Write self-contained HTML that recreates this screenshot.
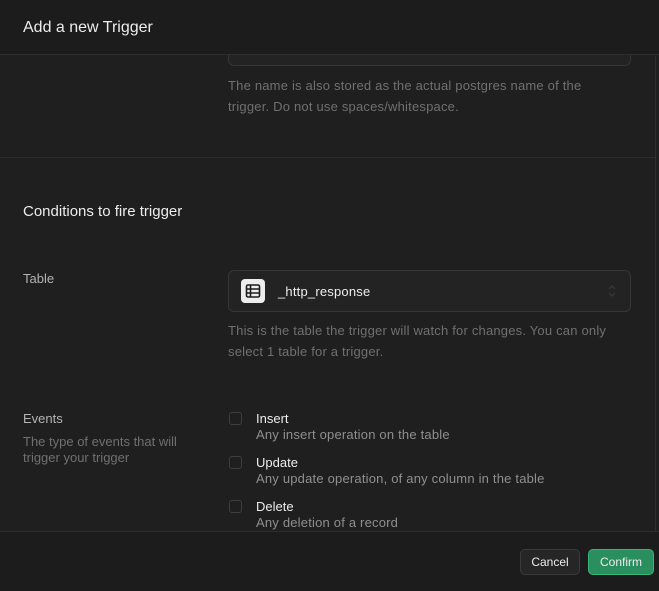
<!DOCTYPE html>
<html><head><style>
*{margin:0;padding:0;box-sizing:border-box}
body{width:659px;height:591px;background:#1f1f1f;font-family:"Liberation Sans",sans-serif;color:#ededed;position:relative;overflow:hidden}
.hdr{position:absolute;left:0;top:0;width:659px;height:55px;background:#1c1c1c;border-bottom:1px solid #2e2e2e}
.hdr span{position:absolute;left:23px;top:19px;font-size:16px;color:#ededed}
.t{position:absolute;font-size:13px}
.muted{color:#707070;font-size:13px;line-height:21px;white-space:nowrap;letter-spacing:0.2px}
.box{position:absolute;border:1px solid #363636;border-radius:6px;background:#232323}
.cb{position:absolute;left:229px;width:13px;height:13px;border:1px solid #3e3e3e;border-radius:3px}
.lab{position:absolute;left:256px;font-size:13px;color:#ededed}
.sub{position:absolute;left:256px;font-size:13px;color:#8f8f8f;letter-spacing:0.2px}
.btn{position:absolute;top:549px;height:26px;border-radius:5px;font-size:12px;text-align:center;line-height:24px}
</style></head><body>
<div class="box" style="left:228px;top:30px;width:403px;height:36px;border-top:none"></div>
<div class="hdr"><span>Add a new Trigger</span></div>
<div class="t muted" style="left:228px;top:75px">The name is also stored as the actual postgres name of the<br>trigger. Do not use spaces/whitespace.</div>
<div style="position:absolute;left:0;top:157px;width:655px;height:1px;background:#2b2b2b"></div>
<div class="t" style="left:23px;top:203px;font-size:15px">Conditions to fire trigger</div>
<div class="t" style="left:23px;top:271px;color:#b4b4b4">Table</div>
<div class="box" style="left:228px;top:270px;width:403px;height:42px"></div>
<div style="position:absolute;left:241px;top:279px;width:24px;height:24px;background:#ededed;border-radius:4px"></div>
<svg style="position:absolute;left:245px;top:283px" width="16" height="16" viewBox="0 0 16 16" fill="none" stroke="#1c1c1c" stroke-width="1.6"><rect x="1.5" y="2" width="13" height="12" rx="1.5"/><path d="M1.5 6h13M1.5 10h13M5.5 2v12"/></svg>
<div class="t" style="left:278px;top:284px;color:#ededed;letter-spacing:0.2px">_http_response</div>
<svg style="position:absolute;left:607px;top:283px" width="10" height="16" viewBox="0 0 10 16" fill="none" stroke="#3a3a3a" stroke-width="1.2"><path d="M2 6l3-3 3 3M2 10l3 3 3-3"/></svg>
<div class="t muted" style="left:228px;top:320px">This is the table the trigger will watch for changes. You can only<br>select 1 table for a trigger.</div>
<div class="t" style="left:23px;top:411px;color:#b4b4b4">Events</div>
<div class="t" style="left:23px;top:434px;width:190px;color:#707070;line-height:16px">The type of events that will trigger your trigger</div>
<div class="cb" style="top:412px"></div><div class="lab" style="top:411px">Insert</div><div class="sub" style="top:427px">Any insert operation on the table</div>
<div class="cb" style="top:456px"></div><div class="lab" style="top:455px">Update</div><div class="sub" style="top:471px">Any update operation, of any column in the table</div>
<div class="cb" style="top:500px"></div><div class="lab" style="top:499px">Delete</div><div class="sub" style="top:515px">Any deletion of a record</div>
<div style="position:absolute;left:655px;top:56px;width:1px;height:475px;background:#2e2e2e"></div>
<div style="position:absolute;left:0;top:531px;width:659px;height:60px;background:#1c1c1c;border-top:1px solid #2e2e2e"></div>
<div class="btn" style="left:520px;width:60px;background:#262626;border:1px solid #3a3a3a;color:#ededed">Cancel</div>
<div class="btn" style="left:588px;width:66px;background:#2a8f5e;border:1px solid #3ab47a;color:#ededed">Confirm</div>
</body></html>
